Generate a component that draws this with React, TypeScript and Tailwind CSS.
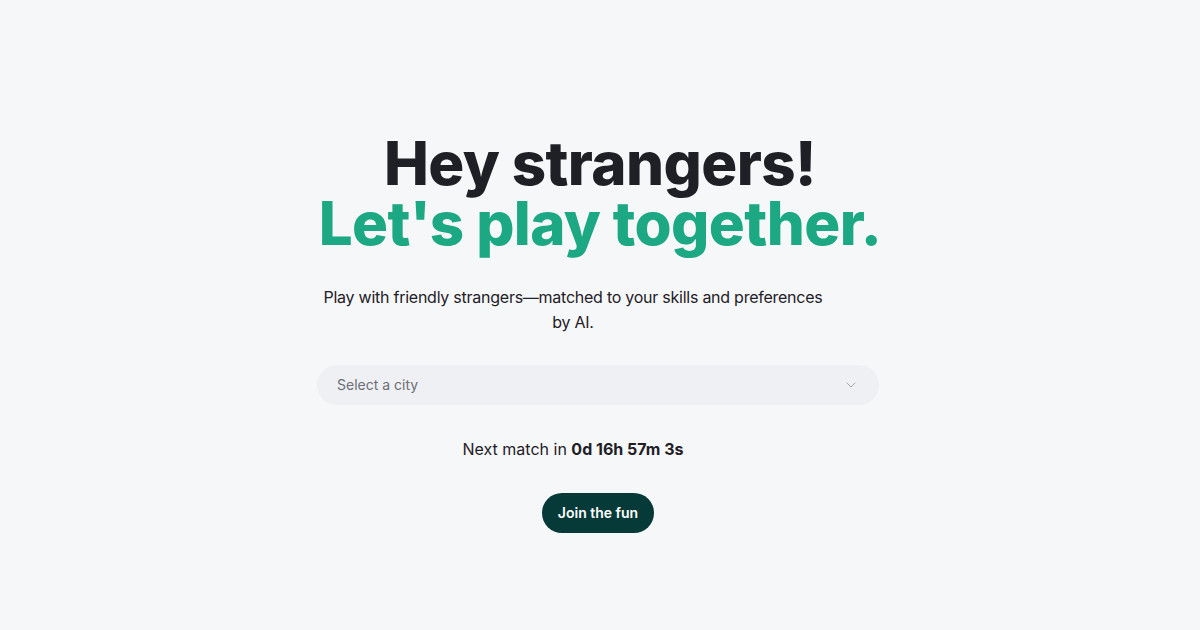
import { ChevronDown } from 'lucide-react';

export default function App() {
  return (
    <div className="min-h-[630px] w-full bg-[#f6f7f9] font-['Inter',sans-serif] text-[#1f2026]">
      <main className="flex flex-col items-center pt-[133px]">
        <h1 className="text-center text-6xl font-extrabold leading-[60px] tracking-[-0.01em]">
          <span className="block text-[#1f2026]">Hey strangers!</span>
          <span className="block text-[#1ba882]">Let's play together.</span>
        </h1>

        {/* subtitle sits a bit left of the page centre in the original */}
        <div className="mt-8 pr-[54px]">
          <p className="w-[520px] text-center text-base leading-[25px] tracking-[-0.25px] text-[#1f2026]">
            Play with friendly strangers—matched to your skills and preferences by AI.
          </p>
        </div>

        <button className="mt-[30px] mr-1 flex h-10 w-[562px] items-center justify-between rounded-full bg-[#eff0f3] pl-5 pr-5 text-sm text-[#6b6e76]">
          <span>Select a city</span>
          <ChevronDown className="h-4 w-4 text-[#a3a6ad]" strokeWidth={1.5} />
        </button>

        <p className="mt-8 pr-[54px] text-base leading-6">
          Next match in <span className="font-bold">0d 16h 57m 3s</span>
        </p>

        <button className="mt-8 mr-1 h-10 rounded-full bg-[#053a38] px-4 text-sm font-semibold text-white">
          Join the fun
        </button>
      </main>
    </div>
  );
}
